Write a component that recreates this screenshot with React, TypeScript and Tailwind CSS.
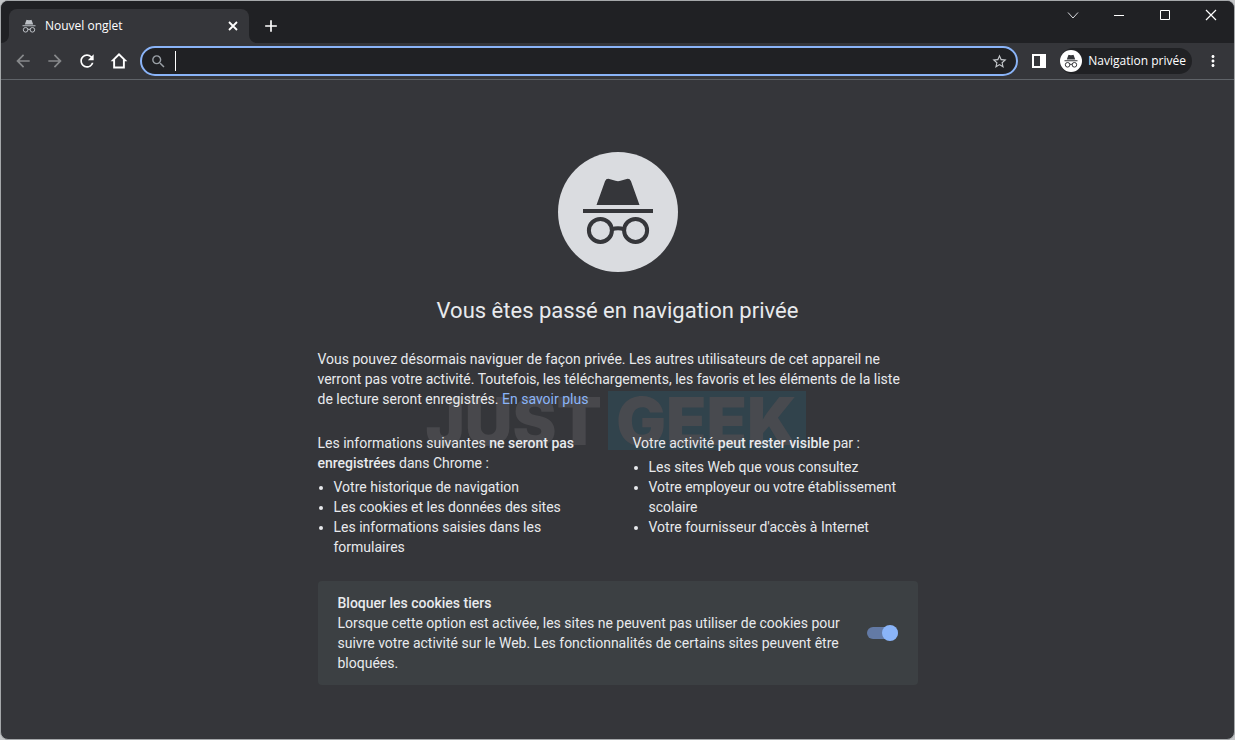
import { useState } from 'react';
import { MdAdd, MdArrowBack, MdArrowForward, MdMoreVert, MdRefresh, MdSearch, MdStarBorder } from 'react-icons/md';

const keptPrivate = [
  'Votre historique de navigation',
  'Les cookies et les données des sites',
  'Les informations saisies dans les formulaires',
];

const stillVisible = [
  'Les sites Web que vous consultez',
  'Votre employeur ou votre établissement scolaire',
  "Votre fournisseur d'accès à Internet",
];

function IncognitoIcon({ className }: { className: string }) {
  return (
    <svg viewBox="0 0 120 120" className={className} aria-hidden="true">
      <path
        d="M38.5 53 47 29.2Q48.2 26.2 51.3 26.9L57.5 28.8Q60 29.5 62.5 28.8L68.7 26.9Q71.8 26.2 73 29.2L81.5 53Z"
        fill="currentColor"
      />
      <path d="M25 57h70v4H25z" fill="currentColor" />
      <g fill="none" stroke="currentColor" strokeWidth="4">
        <circle cx="42.4" cy="78.4" r="11.5" />
        <circle cx="77.6" cy="78.4" r="11.5" />
        <path d="M53.5 77.5Q60 75 66.5 77.5" />
      </g>
    </svg>
  );
}

// Simplified glyph for 12px - 16px sizes
function IncognitoSmallIcon({ className }: { className: string }) {
  return (
    <svg viewBox="0 0 16 16" className={className} aria-hidden="true">
      <path d="M3.8 6.5 5.2 2.4Q5.5 1.7 6.3 1.9L8 2.3 9.7 1.9Q10.5 1.7 10.8 2.4L12.2 6.5Z" fill="currentColor" />
      <path d="M1.5 7.3h13v1h-13z" fill="currentColor" />
      <g fill="none" stroke="currentColor">
        <circle cx="4.6" cy="11.8" r="2.3" />
        <circle cx="11.4" cy="11.8" r="2.3" />
        <path d="M6.8 11.5Q8 10.8 9.2 11.5" />
      </g>
    </svg>
  );
}

function TabStrip() {
  return (
    <div className="flex h-[42px] items-stretch bg-[#202124] pl-2">
      <div className="relative mt-2 flex w-60 items-center rounded-t-lg bg-[#35363a] pl-3 pr-2 text-white">
        <IncognitoSmallIcon className="size-4 text-[#bdc1c6]" />
        <span className="ml-2 flex-1">Nouvel onglet</span>
        <button type="button" aria-label="Fermer l'onglet" className="flex size-4 items-center justify-center">
          <svg viewBox="0 0 12 12" className="size-3" stroke="currentColor" strokeWidth="1.8" aria-hidden="true">
            <path d="M2 2l8 8M10 2l-8 8" />
          </svg>
        </button>
        <svg viewBox="0 0 8 8" className="absolute -left-2 bottom-0 size-2" aria-hidden="true">
          <path d="M8 0v8H0a8 8 0 0 0 8-8z" fill="#35363a" />
        </svg>
        <svg viewBox="0 0 8 8" className="absolute -right-2 bottom-0 size-2" aria-hidden="true">
          <path d="M0 0v8h8a8 8 0 0 1-8-8z" fill="#35363a" />
        </svg>
      </div>
      <button type="button" aria-label="Nouvel onglet" className="mt-2 flex w-11 items-center justify-center text-white">
        <MdAdd className="size-5" />
      </button>
      <div className="ml-auto flex h-7 items-center text-white">
        <button type="button" aria-label="Rechercher des onglets" className="flex w-[46px] justify-center">
          <svg viewBox="0 0 12 12" className="size-3" fill="none" stroke="#dadce0" aria-hidden="true">
            <path d="M1 3.5l5 5.5 5-5.5" />
          </svg>
        </button>
        <button type="button" aria-label="Réduire" className="flex w-[46px] justify-center">
          <svg viewBox="0 0 12 12" className="size-3" stroke="currentColor" aria-hidden="true">
            <path d="M1 6.5h10" />
          </svg>
        </button>
        <button type="button" aria-label="Agrandir" className="flex w-[46px] justify-center">
          <svg viewBox="0 0 12 12" className="size-3" fill="none" stroke="currentColor" aria-hidden="true">
            <path d="M1.5 1.5h9v9h-9z" />
          </svg>
        </button>
        <button type="button" aria-label="Fermer" className="flex w-[46px] justify-center">
          <svg viewBox="0 0 12 12" className="size-3" stroke="currentColor" strokeWidth="1.2" aria-hidden="true">
            <path d="M1 1l10 10M11 1L1 11" />
          </svg>
        </button>
      </div>
    </div>
  );
}

function Toolbar() {
  const [query, setQuery] = useState('');

  return (
    <div className="flex h-[37px] items-center border-b border-[#5f6368] bg-[#35363a] px-3">
      <div className="flex items-center gap-3 text-white">
        <button type="button" aria-label="Retour" className="text-[#86888a]">
          <MdArrowBack className="size-5" />
        </button>
        <button type="button" aria-label="Avancer" className="text-[#86888a]">
          <MdArrowForward className="size-5" />
        </button>
        <button type="button" aria-label="Actualiser">
          <MdRefresh className="size-5" />
        </button>
        <button type="button" aria-label="Accueil">
          <svg viewBox="0 0 24 24" className="size-5" fill="currentColor" aria-hidden="true">
            <path d="M12 2.5 2 12.2h3V21h14v-8.8h3zM12 5.6l4.7 4.6v8.5H7.3v-8.5z" fillRule="evenodd" />
          </svg>
        </button>
      </div>
      <label className="ml-[11px] flex h-[30px] flex-1 items-center rounded-full border-2 border-[#8ab4f8] bg-[#202124] px-2">
        <MdSearch className="size-[17px] text-[#9aa0a6]" />
        <span className="ml-2 h-5 w-px bg-white" />
        <input
          type="text"
          aria-label="Barre d'adresse et de recherche"
          value={query}
          onChange={e => setQuery(e.target.value)}
          className="min-w-0 flex-1 bg-transparent text-sm text-white outline-none"
        />
        <button type="button" aria-label="Ajouter cet onglet aux favoris" className="text-[#c4c7ca]">
          <MdStarBorder className="size-[17px]" />
        </button>
      </label>
      <button type="button" aria-label="Panneau latéral" className="ml-3 text-white">
        <svg viewBox="0 0 18 18" className="size-[18px]" aria-hidden="true">
          <path d="M2 2h14v14H2zM4 4v10h6V4z" fill="currentColor" fillRule="evenodd" />
        </svg>
      </button>
      <button type="button" className="ml-3 flex h-[26px] items-center rounded-full bg-[#202124] pr-1.5 text-white">
        <span className="flex size-[22px] items-center justify-center rounded-full bg-white text-[#35363a]">
          <IncognitoSmallIcon className="size-4" />
        </span>
        <span className="ml-1.5">Navigation privée</span>
      </button>
      <button type="button" aria-label="Menu" className="ml-3 text-white">
        <MdMoreVert className="size-[18px]" />
      </button>
    </div>
  );
}

function BulletList({ items }: { items: string[] }) {
  return (
    <ul className="mt-1 list-disc pl-4">
      {items.map(item => (
        <li key={item}>{item}</li>
      ))}
    </ul>
  );
}

export default function App() {
  const [blockCookies, setBlockCookies] = useState(true);

  return (
    <div className="flex min-h-screen bg-[#c4c6c8]">
      <div className="flex flex-1 flex-col overflow-hidden rounded-lg border border-[#a5a8aa] bg-[#35363a] font-['Open_Sans','Noto_Sans',sans-serif] text-xs">
        <TabStrip />
        <Toolbar />
        <main className="relative mx-auto w-full max-w-[600px] pt-[72px] pb-6 font-['Roboto',sans-serif] text-sm text-[#e8eaed]">
          <div className="mx-auto size-[120px] rounded-full bg-[#dadce0] text-[#35363a]">
            <IncognitoIcon className="size-full" />
          </div>
          <h1 className="mt-6 text-center text-[22px] leading-[29px]">Vous êtes passé en navigation privée</h1>

          {/* Site watermark, sits behind the page text */}
          <div
            aria-hidden="true"
            className="pointer-events-none absolute top-[311px] left-[108px] flex h-[59px] items-center gap-1.5 font-['Inter',sans-serif] text-[66px] leading-none font-black text-[#48484c]"
          >
            <span>JUST</span>
            <span className="flex h-full w-[198px] items-center justify-center bg-[#31434c] text-[#484a4f]">GEEK</span>
          </div>

          <div className="relative">
            <p className="mt-6">
              Vous pouvez désormais naviguer de façon privée. Les autres utilisateurs de cet appareil ne verront pas
              votre activité. Toutefois, les téléchargements, les favoris et les éléments de la liste de lecture seront
              enregistrés.{' '}
              <a href="#en-savoir-plus" className="text-[#8ab4f8]">
                En savoir plus
              </a>
            </p>

            <div className="mt-6 grid grid-cols-2 gap-[30px]">
              <div>
                <p>
                  Les informations suivantes <strong className="font-medium">ne seront pas enregistrées</strong> dans
                  Chrome :
                </p>
                <BulletList items={keptPrivate} />
              </div>
              <div>
                <p>
                  Votre activité <strong className="font-medium">peut rester visible</strong> par :
                </p>
                <BulletList items={stillVisible} />
              </div>
            </div>

            <label className="mt-6 flex items-center rounded bg-[#3c4043] px-5 py-3">
              <span className="flex-1">
                <span className="block font-medium">Bloquer les cookies tiers</span>
                <span className="block">
                  Lorsque cette option est activée, les sites ne peuvent pas utiliser de cookies pour suivre votre
                  activité sur le Web. Les fonctionnalités de certains sites peuvent être bloquées.
                </span>
              </span>
              <input
                type="checkbox"
                role="switch"
                checked={blockCookies}
                onChange={e => setBlockCookies(e.target.checked)}
                className="peer sr-only"
              />
              <span className="ml-6 flex h-3 w-[31px] items-center rounded-full bg-[#5f6368] peer-checked:justify-end peer-checked:bg-[#637aa5]">
                <span className="size-4 rounded-full bg-[#8ab4f8]" />
              </span>
            </label>
          </div>
        </main>
      </div>
    </div>
  );
}
